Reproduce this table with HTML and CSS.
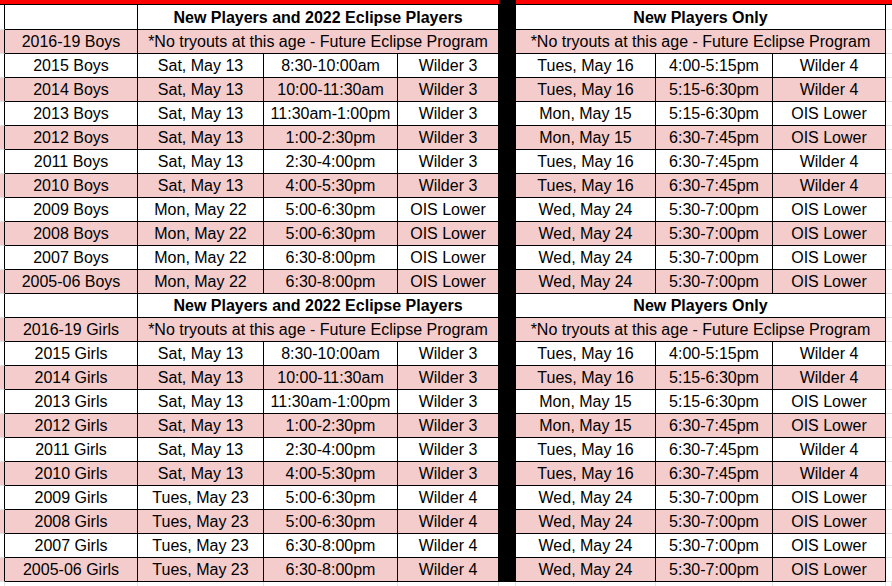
FILE: index.html
```html
<!DOCTYPE html>
<html>
<head>
<meta charset="utf-8">
<link rel="stylesheet" href="styles.css">
</head>
<body>
<div class="sheet">
  <div class="row bar">
    <div class="c red"></div><div class="c red span4"></div><div class="c gap"></div><div class="c red span4"></div>
  </div>

  <div class="row head first">
    <div class="c stub"></div><div class="c"></div><div class="c span3 b">New Players and 2022 Eclipse Players</div><div class="c gap"></div><div class="c span3 b">New Players Only</div><div class="c stubr"></div>
  </div>
  <div class="row pink"><div class="c stub"></div><div class="c">2016-19 Boys</div><div class="c span3">*No tryouts at this age - Future Eclipse Program</div><div class="c gap"></div><div class="c span3">*No tryouts at this age - Future Eclipse Program</div><div class="c stubr"></div></div>
  <div class="row"><div class="c stub"></div><div class="c">2015 Boys</div><div class="c">Sat, May 13</div><div class="c">8:30-10:00am</div><div class="c">Wilder 3</div><div class="c gap"></div><div class="c">Tues, May 16</div><div class="c">4:00-5:15pm</div><div class="c">Wilder 4</div><div class="c stubr"></div></div>
  <div class="row pink"><div class="c stub"></div><div class="c">2014 Boys</div><div class="c">Sat, May 13</div><div class="c">10:00-11:30am</div><div class="c">Wilder 3</div><div class="c gap"></div><div class="c">Tues, May 16</div><div class="c">5:15-6:30pm</div><div class="c">Wilder 4</div><div class="c stubr"></div></div>
  <div class="row"><div class="c stub"></div><div class="c">2013 Boys</div><div class="c">Sat, May 13</div><div class="c">11:30am-1:00pm</div><div class="c">Wilder 3</div><div class="c gap"></div><div class="c">Mon, May 15</div><div class="c">5:15-6:30pm</div><div class="c">OIS Lower</div><div class="c stubr"></div></div>
  <div class="row pink"><div class="c stub"></div><div class="c">2012 Boys</div><div class="c">Sat, May 13</div><div class="c">1:00-2:30pm</div><div class="c">Wilder 3</div><div class="c gap"></div><div class="c">Mon, May 15</div><div class="c">6:30-7:45pm</div><div class="c">OIS Lower</div><div class="c stubr"></div></div>
  <div class="row"><div class="c stub"></div><div class="c">2011 Boys</div><div class="c">Sat, May 13</div><div class="c">2:30-4:00pm</div><div class="c">Wilder 3</div><div class="c gap"></div><div class="c">Tues, May 16</div><div class="c">6:30-7:45pm</div><div class="c">Wilder 4</div><div class="c stubr"></div></div>
  <div class="row pink"><div class="c stub"></div><div class="c">2010 Boys</div><div class="c">Sat, May 13</div><div class="c">4:00-5:30pm</div><div class="c">Wilder 3</div><div class="c gap"></div><div class="c">Tues, May 16</div><div class="c">6:30-7:45pm</div><div class="c">Wilder 4</div><div class="c stubr"></div></div>
  <div class="row"><div class="c stub"></div><div class="c">2009 Boys</div><div class="c">Mon, May 22</div><div class="c">5:00-6:30pm</div><div class="c">OIS Lower</div><div class="c gap"></div><div class="c">Wed, May 24</div><div class="c">5:30-7:00pm</div><div class="c">OIS Lower</div><div class="c stubr"></div></div>
  <div class="row pink"><div class="c stub"></div><div class="c">2008 Boys</div><div class="c">Mon, May 22</div><div class="c">5:00-6:30pm</div><div class="c">OIS Lower</div><div class="c gap"></div><div class="c">Wed, May 24</div><div class="c">5:30-7:00pm</div><div class="c">OIS Lower</div><div class="c stubr"></div></div>
  <div class="row"><div class="c stub"></div><div class="c">2007 Boys</div><div class="c">Mon, May 22</div><div class="c">6:30-8:00pm</div><div class="c">OIS Lower</div><div class="c gap"></div><div class="c">Wed, May 24</div><div class="c">5:30-7:00pm</div><div class="c">OIS Lower</div><div class="c stubr"></div></div>
  <div class="row pink"><div class="c stub"></div><div class="c">2005-06 Boys</div><div class="c">Mon, May 22</div><div class="c">6:30-8:00pm</div><div class="c">OIS Lower</div><div class="c gap"></div><div class="c">Wed, May 24</div><div class="c">5:30-7:00pm</div><div class="c">OIS Lower</div><div class="c stubr"></div></div>

  <div class="row head">
    <div class="c stub"></div><div class="c"></div><div class="c span3 b">New Players and 2022 Eclipse Players</div><div class="c gap"></div><div class="c span3 b">New Players Only</div><div class="c stubr"></div>
  </div>
  <div class="row pink"><div class="c stub"></div><div class="c">2016-19 Girls</div><div class="c span3">*No tryouts at this age - Future Eclipse Program</div><div class="c gap"></div><div class="c span3">*No tryouts at this age - Future Eclipse Program</div><div class="c stubr"></div></div>
  <div class="row"><div class="c stub"></div><div class="c">2015 Girls</div><div class="c">Sat, May 13</div><div class="c">8:30-10:00am</div><div class="c">Wilder 3</div><div class="c gap"></div><div class="c">Tues, May 16</div><div class="c">4:00-5:15pm</div><div class="c">Wilder 4</div><div class="c stubr"></div></div>
  <div class="row pink"><div class="c stub"></div><div class="c">2014 Girls</div><div class="c">Sat, May 13</div><div class="c">10:00-11:30am</div><div class="c">Wilder 3</div><div class="c gap"></div><div class="c">Tues, May 16</div><div class="c">5:15-6:30pm</div><div class="c">Wilder 4</div><div class="c stubr"></div></div>
  <div class="row"><div class="c stub"></div><div class="c">2013 Girls</div><div class="c">Sat, May 13</div><div class="c">11:30am-1:00pm</div><div class="c">Wilder 3</div><div class="c gap"></div><div class="c">Mon, May 15</div><div class="c">5:15-6:30pm</div><div class="c">OIS Lower</div><div class="c stubr"></div></div>
  <div class="row pink"><div class="c stub"></div><div class="c">2012 Girls</div><div class="c">Sat, May 13</div><div class="c">1:00-2:30pm</div><div class="c">Wilder 3</div><div class="c gap"></div><div class="c">Mon, May 15</div><div class="c">6:30-7:45pm</div><div class="c">OIS Lower</div><div class="c stubr"></div></div>
  <div class="row"><div class="c stub"></div><div class="c">2011 Girls</div><div class="c">Sat, May 13</div><div class="c">2:30-4:00pm</div><div class="c">Wilder 3</div><div class="c gap"></div><div class="c">Tues, May 16</div><div class="c">6:30-7:45pm</div><div class="c">Wilder 4</div><div class="c stubr"></div></div>
  <div class="row pink"><div class="c stub"></div><div class="c">2010 Girls</div><div class="c">Sat, May 13</div><div class="c">4:00-5:30pm</div><div class="c">Wilder 3</div><div class="c gap"></div><div class="c">Tues, May 16</div><div class="c">6:30-7:45pm</div><div class="c">Wilder 4</div><div class="c stubr"></div></div>
  <div class="row"><div class="c stub"></div><div class="c">2009 Girls</div><div class="c">Tues, May 23</div><div class="c">5:00-6:30pm</div><div class="c">Wilder 4</div><div class="c gap"></div><div class="c">Wed, May 24</div><div class="c">5:30-7:00pm</div><div class="c">OIS Lower</div><div class="c stubr"></div></div>
  <div class="row pink"><div class="c stub"></div><div class="c">2008 Girls</div><div class="c">Tues, May 23</div><div class="c">5:00-6:30pm</div><div class="c">Wilder 4</div><div class="c gap"></div><div class="c">Wed, May 24</div><div class="c">5:30-7:00pm</div><div class="c">OIS Lower</div><div class="c stubr"></div></div>
  <div class="row"><div class="c stub"></div><div class="c">2007 Girls</div><div class="c">Tues, May 23</div><div class="c">6:30-8:00pm</div><div class="c">Wilder 4</div><div class="c gap"></div><div class="c">Wed, May 24</div><div class="c">5:30-7:00pm</div><div class="c">OIS Lower</div><div class="c stubr"></div></div>
  <div class="row pink"><div class="c stub"></div><div class="c">2005-06 Girls</div><div class="c">Tues, May 23</div><div class="c">6:30-8:00pm</div><div class="c">Wilder 4</div><div class="c gap"></div><div class="c">Wed, May 24</div><div class="c">5:30-7:00pm</div><div class="c">OIS Lower</div><div class="c stubr"></div></div>

  <div class="row tail">
    <div class="c"></div><div class="c"></div><div class="c"></div><div class="c"></div><div class="c"></div><div class="c"></div><div class="c"></div><div class="c"></div><div class="c"></div><div class="c"></div>
  </div>
</div>
</body>
</html>
```

FILE: styles.css
```css
html, body {
  margin: 0;
  padding: 0;
  background: #ffffff;
}
body {
  width: 892px;
  height: 586px;
  overflow: hidden;
  font-family: "Liberation Sans", Arial, sans-serif;
  font-size: 16px;
  color: #000000;
}
.sheet {
  display: flex;
  flex-direction: column;
}
.row {
  display: grid;
  grid-template-columns: 5px 133px 126px 134px 101px 17px 140px 117px 113px 6px;
  height: 24px;
}
.c {
  box-sizing: border-box;
  border-right: 1px solid #000;
  border-bottom: 1px solid #000;
  display: flex;
  align-items: center;
  justify-content: center;
  white-space: nowrap;
  overflow: hidden;
  padding-top: 1px;
}
.span3 { grid-column: span 3; }
.span4 { grid-column: span 4; }
.b { font-weight: bold; }
.pink .c { background: #f4cccc; }
.c.gap { background: #000000; }
.stub { border-bottom-color: #e2e2e2; }
.stubr { border-right: none; border-bottom-color: #e2e2e2; background: #ffffff !important; }

.bar { height: 4px; }
.bar .c { border: none; background: #ff0000; }
.bar .c.gap { background: #000; }

.first { height: 26px; }
.first .c { border-top: 1px solid #000; }

.tail { height: 5px; }
.tail .c { border-bottom: none; border-right: 1px solid #e2e2e2; background: #ffffff; }
```
